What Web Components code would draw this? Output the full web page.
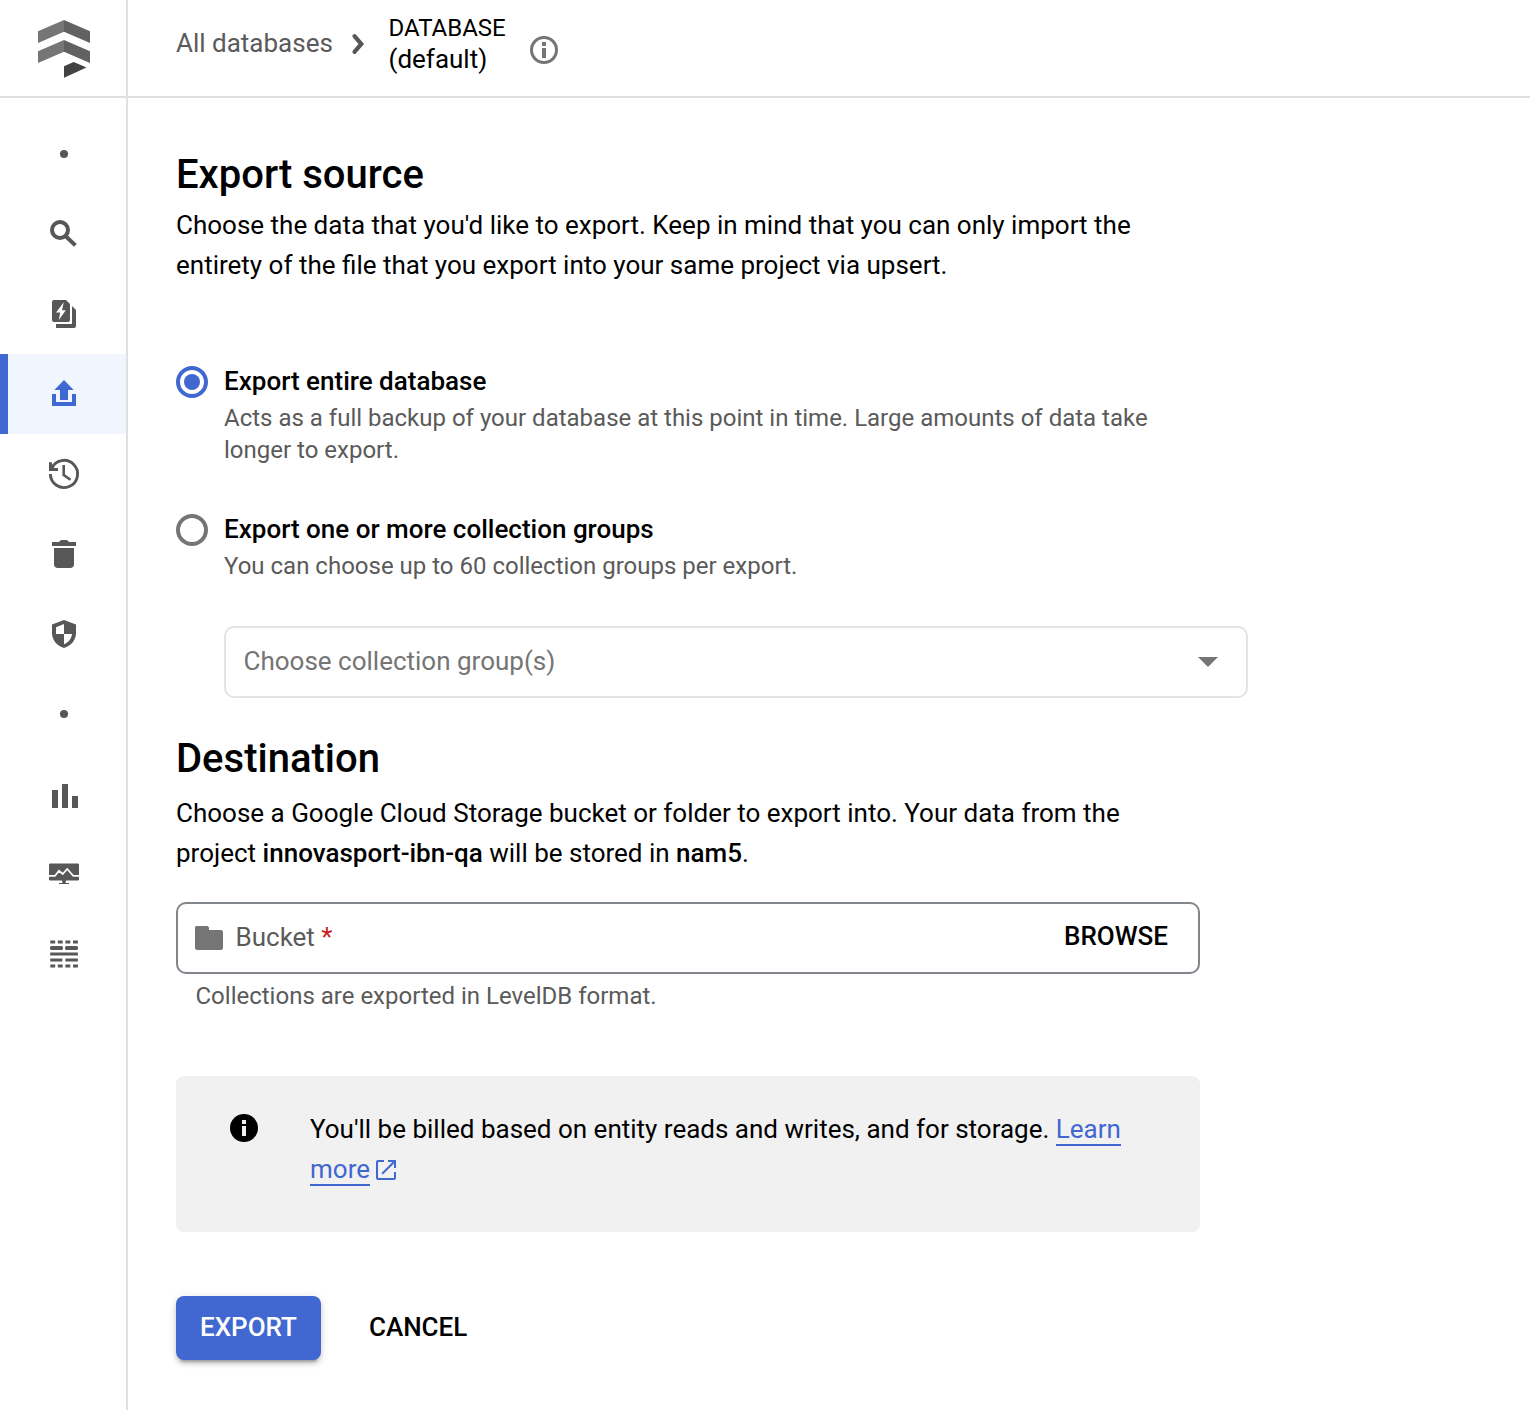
<!DOCTYPE html>
<html lang="en">
<head>
<meta charset="utf-8">
<title>Export</title>
<style>
  body { margin: 0; background: #fff; color: #000; font: 26px/40px Roboto, "Liberation Sans", sans-serif; }
</style>
</head>
<body>
<db-app></db-app>
<script>
const define = (name, html) => customElements.define(name, class extends HTMLElement {
  connectedCallback() {
    if (this.shadowRoot) return;
    const root = this.attachShadow({ mode: 'open' });
    const t = document.createElement('template');
    t.innerHTML = '<style>*,:host{box-sizing:border-box}</style>' + (typeof html === 'function' ? html(this) : html);
    root.append(t.content.cloneNode(true));
  }
});

const ICONS = {
  dot: '<circle cx="18" cy="18" r="4"/>',
  search: '<circle cx="14" cy="14" r="8" fill="none" stroke="currentColor" stroke-width="4"/><path d="M19 19.5L29.4 29.4" stroke="currentColor" stroke-width="4"/>',
  query: '<path fill-rule="evenodd" d="M8 4H20L24 8V24a2 2 0 0 1-2 2H8a2 2 0 0 1-2-2V6a2 2 0 0 1 2-2zM17.8 6.3L10 16.6H14.2L12.8 24L19.8 14.3H16z"/><path d="M26 10L30 14V30a2 2 0 0 1-2 2H10V28H26z"/>',
  upload: '<path d="M18 4L27.7 14H22V24H14V14H8.3z"/><path d="M6 18h4v8h16v-8h4v12H6z"/>',
  history: '<path d="M4.4 18A13.6 13.6 0 1 0 5.500 12.6" fill="none" stroke="currentColor" stroke-width="2.9"/><path d="M3 6.2H6V9.6L8.3 12H12V15H3z"/><path d="M17.7 9V19L24.5 23.7" fill="none" stroke="currentColor" stroke-width="2.6"/>',
  trash: '<path d="M6 6H13Q14 4 16 4H20Q22 4 23 6H30V10H6z"/><path d="M8 12H28V28a4 4 0 0 1-4 4H12a4 4 0 0 1-4-4z"/>',
  shield: '<path fill-rule="evenodd" d="M18 4L30 8.5V17C30 24 25 30 18 32C11 30 6 24 6 17V8.5zM18 8L10 11.3V18H18zM18 18V28.3C22.5 26.5 25.5 22.5 26 18z"/>',
  bars: '<path d="M6 14h6v18H6zM16 8h6v24h-6zM26 20h6v12h-6z"/>',
  monitor: '<rect x="3" y="7.5" width="30" height="17" rx="1.2"/><path d="M16.2 24h3.6v3H23v1H13v-1h3.2z"/><path d="M3 19.8H9L13 14.8L16.7 18L21.2 13L27.3 19.8H33" fill="none" stroke="#fff" stroke-width="1.7"/>',
  grid: '<path d="M4.3 4.5h4.9v3H4.3zM11.8 4.5h4.9v3h-4.9zM19.4 4.5h4.9v3h-4.9zM27 4.5h4.9v3H27zM4.3 28.500h4.9v3H4.3zM11.8 28.5h4.9v3h-4.9zM19.4 28.5h4.9v3h-4.9zM27 28.5h4.9v3H27zM4.2 16.4H31.9v3H4.2zM4.2 22.5H16.4v3H4.2zM19.4 22.5H31.9v3H19.4z"/><rect x="4" y="10" width="13" height="4" rx="1.5"/><rect x="19" y="10" width="13" height="4" rx="1.5"/>',
  chevron: '<path d="M14.5 10.2L21.3 18L14.5 25.8" fill="none" stroke="currentColor" stroke-width="4.2" stroke-linecap="round"/>',
  info: '<circle cx="18" cy="18" r="12.5" fill="none" stroke="currentColor" stroke-width="3"/><path d="M16 10h4v4h-4zM16 16h4v10h-4z"/>',
  infoFill: '<path fill-rule="evenodd" d="M18 4a14 14 0 1 0 0 28a14 14 0 1 0 0-28zM16 10h4v4h-4zM16 16h4v10h-4z"/>',
  folder: '<path d="M5 6H16.5L18 7.5V10H30.5L32 11.5V28.5L30.5 30H5.5L4 28.5V7z"/>',
  caret: '<path d="M8 13H28L18 23z"/>',
  open: '<path d="M16 9H10a1 1 0 0 0-1 1V26a1 1 0 0 0 1 1H26a1 1 0 0 0 1-1V20M20 9H27V16M26.5 9.5L14.200 21.8" fill="none" stroke="currentColor" stroke-width="2"/>'
};

define('db-icon', el => `<style>:host{display:block;width:36px;height:36px;flex:none}svg{display:block;fill:currentColor}</style>
<svg width="36" height="36" viewBox="0 0 36 36">${ICONS[el.getAttribute('name')]}</svg>`);

define('db-logo', `<style>:host{display:block;width:52px;height:58px}svg{display:block}</style>
<svg width="52" height="58" viewBox="0 0 52 58">
  <path fill="#757575" d="M0 11.3L26 0V11.7L0 23zM0 31.3L26 20V31.7L0 43z"/>
  <path fill="#616161" d="M26 0L52 11.3V23L26 11.7zM26 20L52 31.3V43L26 31.7z"/>
  <path fill="#424242" d="M26 46.3L35.7 42L48.5 47.6L26 57.7z"/>
</svg>`);

define('db-nav-item', el => `<style>
:host{display:flex;height:80px;align-items:center;padding-left:46px;color:#575757}
:host([active]){background:#f0f5fe;color:#4167d0;border-left:8px solid #4167d0;padding-left:38px}
</style><db-icon name="${el.getAttribute('icon')}"></db-icon>`);

define('db-sidebar', `<style>
:host{display:flex;flex-direction:column;width:128px;height:1410px;border-right:2px solid #e0e0e0;flex:none}
header{height:98px;border-bottom:2px solid #e0e0e0;padding:20px 0 0 38px}
nav{padding-top:16px}
</style><header><db-logo></db-logo></header><nav><slot></slot></nav>`);

define('db-topbar', `<style>
:host{display:flex;height:98px;border-bottom:2px solid #e0e0e0;padding-left:48px;align-items:flex-start}
.all{color:#5a5a5a;margin-top:23px;width:164px;white-space:nowrap}
.chev{color:#575757;margin-top:26px;width:48.5px}
.cur{margin-top:12px;width:137.5px;white-space:nowrap}
.k{font-size:24px;line-height:32px}
.v{line-height:30px}
.i{color:#757575;margin-top:32px}
</style><div class="all">All databases</div><db-icon class="chev" name="chevron"></db-icon>
<div class="cur"><div class="k">DATABASE</div><div class="v">(default)</div></div><db-icon class="i" name="info"></db-icon>`);

define('db-section', el => `<style>
:host{display:block}
h2{margin:0;font-size:40px;font-weight:500;line-height:56px}
p{margin:var(--gap,2px) 0 0;white-space:nowrap}
</style><h2>${el.getAttribute('heading')}</h2><p><slot></slot></p>`);

define('db-radio', el => `<style>
:host{display:flex;gap:16px;white-space:nowrap}
.o{width:32px;height:32px;border:4px solid #757575;border-radius:50%;display:flex;align-items:center;justify-content:center;margin-top:4px}
:host([checked]) .o{border-color:#4167d0}
:host([checked]) .o::before{content:"";width:16px;height:16px;border-radius:50%;background:#4167d0}
.t{font-weight:500;margin:-1px 0 1px}
.d{font-size:24px;line-height:32px;color:#5a5a5a}
</style><div class="o"></div><div><div class="t">${el.getAttribute('label')}</div><div class="d"><slot></slot></div></div>`);

define('db-select', `<style>
:host{display:flex;align-items:center;justify-content:space-between;width:1024px;height:72px;border:2px solid #e4e4e4;border-radius:10px;padding:0 20px 0 17.5px;color:#757575}
span{margin-top:-2px}
</style><span><slot></slot></span><db-icon name="caret"></db-icon>`);

define('db-bucket', `<style>
:host{display:block;width:1024px}
.f{display:flex;align-items:center;height:72px;border:2px solid #80868b;border-radius:10px;padding:0 30px 0 13px;color:#5a5a5a}
.f db-icon{color:#757575;margin-right:8.5px}
.l{flex:1;margin-top:-2px}
b{font-weight:400;color:#c5221f}
.b{font-weight:500;color:#000;margin-top:-4px}
.h{font-size:24px;line-height:32px;margin:6px 0 0 19.5px;color:#5a5a5a}
</style><div class="f"><db-icon name="folder"></db-icon><span class="l">Bucket <b>*</b></span><span class="b">BROWSE</span></div>
<div class="h"><slot></slot></div>`);

define('db-notice', `<style>
:host{display:flex;width:1024px;height:156px;border-radius:8px;background:#f1f1f1;padding:33px 0 0 50px;gap:48px;white-space:nowrap}
db-icon{margin-top:1px}
.line{display:flex;height:40px}
a{color:#4167d0;border-bottom:2px solid #4167d0;height:37px}
.gap{white-space:pre}
.ext{color:#4167d0;margin:3px 0 0 -2px}
</style><db-icon name="infoFill"></db-icon><div><div class="line"><span class="gap">You'll be billed based on entity reads and writes, and for storage. </span><a>Learn</a></div>
<div class="line"><a>more</a><db-icon class="ext" name="open"></db-icon></div></div>`);

define('db-button', `<style>
:host{display:flex;height:64px;align-items:center;padding:0 24px;font-weight:500;border-radius:8px}
:host([primary]){background:#4167d0;color:#fff;box-shadow:0 6px 2px -4px rgba(0,0,0,.2),0 4px 4px rgba(0,0,0,.14),0 2px 10px rgba(0,0,0,.12)}
span{margin-top:-2px}
</style><span><slot></slot></span>`);

define('db-app', `<style>
:host{display:flex;width:1530px;height:1410px;overflow:hidden}
.main{flex:1;min-width:0}
.page{padding:49px 0 0 48px}
.r1{margin-top:77px}.r2{margin-top:44px}
b{font-weight:500}
db-select{margin:44px 0 0 48px}
.dest{margin-top:33px;--gap:6px}
db-bucket{margin-top:29px}
db-notice{margin-top:64px}
.act{display:flex;gap:24px;margin-top:64px}
</style>
<db-sidebar>
  <db-nav-item icon="dot"></db-nav-item><db-nav-item icon="search"></db-nav-item><db-nav-item icon="query"></db-nav-item>
  <db-nav-item icon="upload" active></db-nav-item><db-nav-item icon="history"></db-nav-item><db-nav-item icon="trash"></db-nav-item>
  <db-nav-item icon="shield"></db-nav-item><db-nav-item icon="dot"></db-nav-item><db-nav-item icon="bars"></db-nav-item>
  <db-nav-item icon="monitor"></db-nav-item><db-nav-item icon="grid"></db-nav-item>
</db-sidebar>
<div class="main"><db-topbar></db-topbar><div class="page">
  <db-section heading="Export source">Choose the data that you'd like to export. Keep in mind that you can only import the<br>entirety of the file that you export into your same project via upsert.</db-section>
  <db-radio class="r1" checked label="Export entire database">Acts as a full backup of your database at this point in time. Large amounts of data take<br>longer to export.</db-radio>
  <db-radio class="r2" label="Export one or more collection groups">You can choose up to 60 collection groups per export.</db-radio>
  <db-select>Choose collection group(s)</db-select>
  <db-section class="dest" heading="Destination">Choose a Google Cloud Storage bucket or folder to export into. Your data from the<br>project <b>innovasport-ibn-qa</b> will be stored in <b>nam5</b>.</db-section>
  <db-bucket>Collections are exported in LevelDB format.</db-bucket>
  <db-notice></db-notice>
  <div class="act"><db-button primary>EXPORT</db-button><db-button>CANCEL</db-button></div>
</div></div>`);
</script>
</body>
</html>
